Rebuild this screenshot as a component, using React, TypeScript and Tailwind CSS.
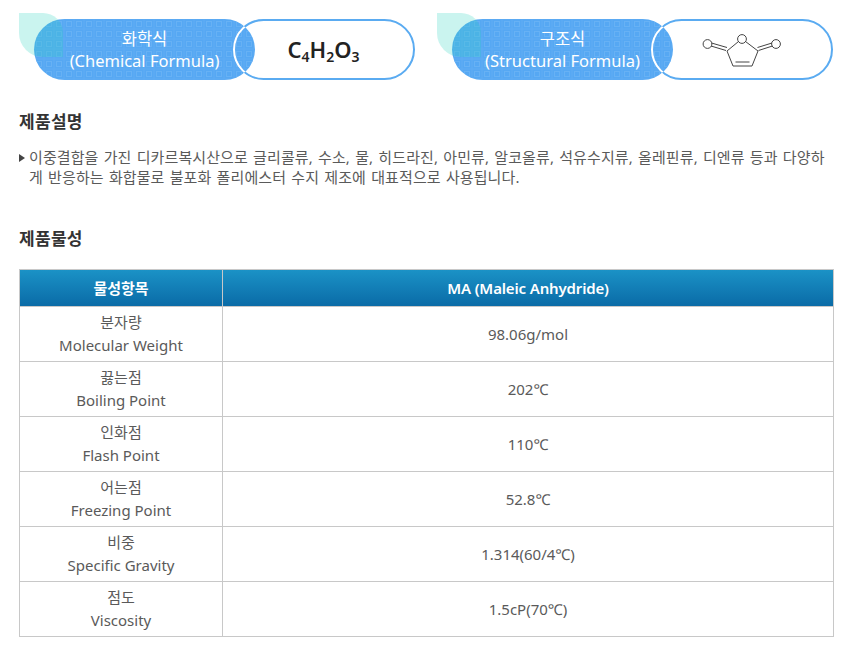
const rows = [
  ["분자량", "Molecular Weight", "98.06g/mol"],
  ["끓는점", "Boiling Point", "202℃"],
  ["인화점", "Flash Point", "110℃"],
  ["어는점", "Freezing Point", "52.8℃"],
  ["비중", "Specific Gravity", "1.314(60/4℃)"],
  ["점도", "Viscosity", "1.5cP(70℃)"],
];

function MaleicAnhydride() {
  return (
    <svg width="80" height="34" viewBox="0 0 80 34" fill="none" stroke="#444" strokeWidth="1">
      <circle cx="5.5" cy="11" r="4.4" />
      <circle cx="40" cy="6" r="4.4" />
      <circle cx="74" cy="11" r="4.4" />
      <path d="M36.5 8.5 L25 18 L31 33 L50 33 L56 18 L43.5 8.5" />
      <path d="M33.5 29 L47.5 29" />
      <path d="M9.5 10 L25 14.5 M9 13 L24 17.5" />
      <path d="M70 10 L55.5 14.5 M70.5 13 L56.5 17.5" />
    </svg>
  );
}

function Pattern({ id }: { id: string }) {
  return (
    <svg className="absolute inset-0" width="221" height="61">
      <defs>
        <pattern id={id} width="10" height="10" patternUnits="userSpaceOnUse">
          <rect x="2.5" y="2.5" width="5" height="5" fill="none" stroke="#ffffff" strokeOpacity="0.1" />
          <rect x="0" y="0" width="10" height="10" fill="none" stroke="#ffffff" strokeOpacity="0.05" />
        </pattern>
      </defs>
      <rect width="221" height="61" fill={`url(#${id})`} />
    </svg>
  );
}

function FormulaPill({ id, title, sub, children }: { id: string; title: string; sub: string; children: React.ReactNode }) {
  return (
    <div className="relative flex h-[67px] w-[396px] items-end pl-[15px]">
      <div className="relative z-10 flex h-[61px] w-[221px] shrink-0 flex-col items-center justify-center overflow-hidden rounded-full bg-[#56a8f3] text-white">
        <Pattern id={id} />
        <div className="relative text-[16.5px] leading-[22px]">{title}</div>
        <div className="relative text-[16.5px] leading-[22px]">{sub}</div>
        <div className="absolute left-[199px] top-0 h-[61px] w-[182px] rounded-full border-2 border-white" />
      </div>
      <div className="ml-[-22px] flex h-[61px] w-[182px] items-center justify-center rounded-full border-2 border-[#5aabf1]">
        {children}
      </div>
      <div className="absolute left-0 top-0 z-20 h-[44px] w-[44px] rounded-tr-[20px] rounded-bl-[24px] bg-[#2dd4bf]/25" />
    </div>
  );
}

export default function App() {
  return (
    <div
      className="w-[860px] bg-white pl-[19px] pr-[26px] pt-[13px] text-[#5a5a5a]"
      style={{ fontFamily: '"Noto Sans", "Noto Sans CJK KR", sans-serif' }}
    >
      <div className="flex gap-[22px]">
        <FormulaPill id="pat-a" title="화학식" sub="(Chemical Formula)">
          <span className="pr-[1px] text-[22px] font-semibold text-[#222]">
            C<sub className="text-[14px]">4</sub>H<sub className="text-[14px]">2</sub>O<sub className="text-[14px]">3</sub>
          </span>
        </FormulaPill>
        <FormulaPill id="pat-b" title="구조식" sub="(Structural Formula)">
          <MaleicAnhydride />
        </FormulaPill>
      </div>

      <h2 className="mt-[30px] text-[17px] font-bold leading-[24px] tracking-[0.3px] text-[#333]">제품설명</h2>
      <div className="relative mt-[13px] pl-[10px] text-[15px] leading-[20px] tracking-[0.1px] [word-spacing:1.2px]">
        <span className="absolute left-0 top-[7px] h-0 w-0 border-y-[4px] border-l-[6px] border-y-transparent border-l-[#444]" />
        이중결합을 가진 디카르복시산으로 글리콜류, 수소, 물, 히드라진, 아민류, 알코올류, 석유수지류, 올레핀류, 디엔류 등과 다양하게 반응하는 화합물로 불포화 폴리에스터 수지 제조에 대표적으로 사용됩니다.
      </div>

      <h2 className="mt-[40px] text-[17px] font-bold leading-[24px] tracking-[0.3px] text-[#333]">제품물성</h2>

      <table className="mt-[18px] w-[815px] table-fixed border-collapse text-center text-[15px] leading-[23px]">
        <thead>
          <tr className="h-[37px] bg-gradient-to-b from-[#1b92c6] to-[#0a6aa6] text-white">
            <th className="w-[203px] border border-[#c8c8c8] font-semibold">물성항목</th>
            <th className="border border-[#c8c8c8] font-semibold tracking-[-0.15px]">MA (Maleic Anhydride)</th>
          </tr>
        </thead>
        <tbody>
          {rows.map((r) => (
            <tr key={r[1]} className="h-[55px]">
              <td className="border border-[#c8c8c8]">
                {r[0]}
                <br />
                {r[1]}
              </td>
              <td className="border border-[#c8c8c8]">{r[2]}</td>
            </tr>
          ))}
        </tbody>
      </table>
    </div>
  );
}
